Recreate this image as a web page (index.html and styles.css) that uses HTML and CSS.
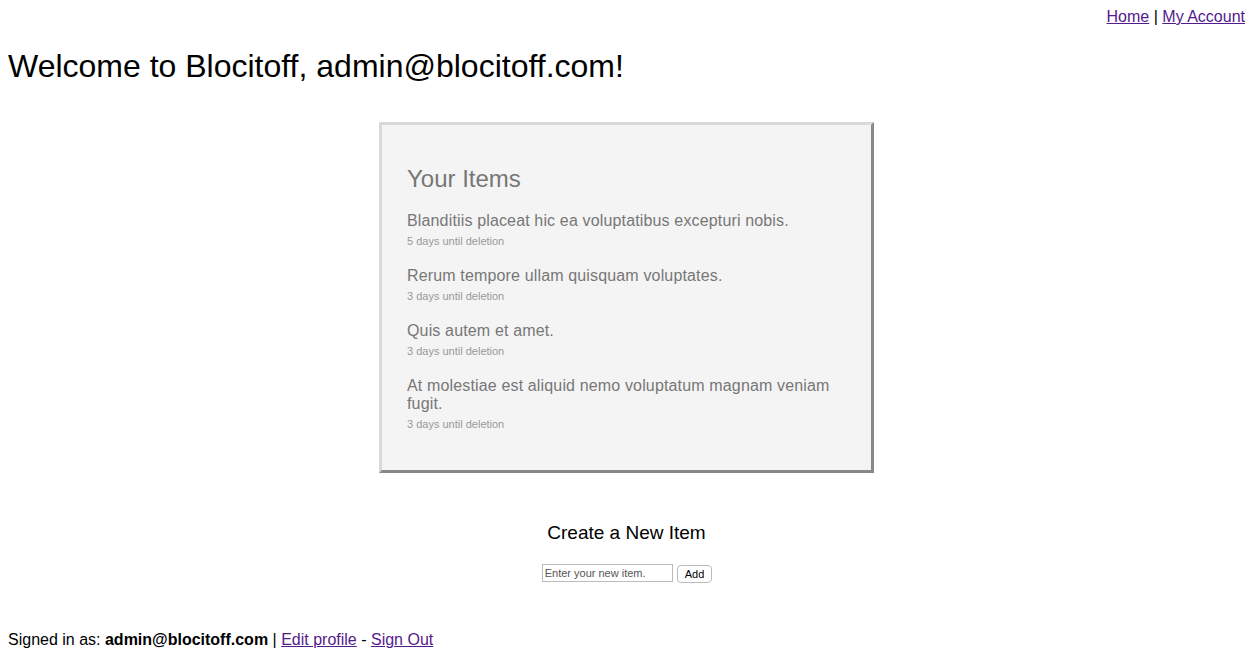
FILE: index.html
```html
<!DOCTYPE html>
<html>
<head>
<meta charset="utf-8">
<title>Blocitoff</title>
<link rel="stylesheet" href="styles.css">
</head>
<body>
<nav class="top-nav"><a href="#">Home</a> | <a href="#">My Account</a></nav>
<h1 class="welcome">Welcome to Blocitoff, admin@blocitoff.com!</h1>
<section class="items-box">
  <h2 class="items-title">Your Items</h2>
  <div class="item">
    <div class="item-name">Blanditiis placeat hic ea voluptatibus excepturi nobis.</div>
    <div class="item-meta">5 days until deletion</div>
  </div>
  <div class="item">
    <div class="item-name">Rerum tempore ullam quisquam voluptates.</div>
    <div class="item-meta">3 days until deletion</div>
  </div>
  <div class="item">
    <div class="item-name">Quis autem et amet.</div>
    <div class="item-meta">3 days until deletion</div>
  </div>
  <div class="item">
    <div class="item-name">At molestiae est aliquid nemo voluptatum magnam veniam fugit.</div>
    <div class="item-meta">3 days until deletion</div>
  </div>
</section>
<section class="create">
  <h3 class="create-title">Create a New Item</h3>
  <form class="create-form">
    <input class="create-input" type="text" placeholder="Enter your new item.">
    <button class="create-btn" type="button">Add</button>
  </form>
</section>
<footer class="footer">Signed in as: <strong>admin@blocitoff.com</strong> | <a href="#">Edit profile</a> - <a href="#">Sign Out</a></footer>
</body>
</html>
```
FILE: styles.css
```css
body {
  margin: 8px 6px 8px 8px;
  font-family: "Liberation Sans", Arial, sans-serif;
  font-size: 16px;
  color: #000;
  background: #fff;
}
a { color: #551a8b; }
.top-nav {
  text-align: right;
  line-height: 18px;
}
.welcome {
  font-size: 32px;
  font-weight: normal;
  margin: 22px 0 0 0;
  line-height: 36px;
}
.items-box {
  width: 439px;
  margin: 38px auto 0;
  padding: 22px 25px 39px 25px;
  background: #f4f4f4;
  border: 3px solid;
  border-color: #d9d9d9 #888 #888 #d9d9d9;
  color: #777;
}
.items-title {
  font-size: 24px;
  font-weight: normal;
  margin: 18px 0 19px;
  line-height: 28px;
}
.item { margin-bottom: 19px; }
.item:last-child { margin-bottom: 0; }
.item-name {
  font-size: 16px;
  line-height: 18px;
  letter-spacing: 0.15px;
}
.item-meta {
  font-size: 11px;
  color: #999;
  margin-top: 5px;
  line-height: 13px;
}
.create {
  text-align: center;
  margin-top: 48px;
}
.create-title {
  font-size: 19px;
  font-weight: normal;
  margin: 0 0 19px;
  line-height: 24px;
}
.create-form { display: flex; justify-content: center; gap: 4px; margin-left: 1px; }
.create-input {
  width: 125px;
  height: 12px;
  padding: 2px;
  border: 1px solid #bbb;
  font-size: 11px;
  font-family: "Liberation Sans", Arial, sans-serif;
  margin: 0;
}
.create-input::placeholder { color: #555; }
.create-btn {
  font-family: "Liberation Sans", Arial, sans-serif;
  font-size: 11px;
  height: 18px;
  padding: 0 7px;
  margin-top: 1px;
  background: #fff;
  border: 1px solid #bbb;
  border-radius: 4px;
}
.footer {
  margin-top: 48px;
  line-height: 18px;
}
```
